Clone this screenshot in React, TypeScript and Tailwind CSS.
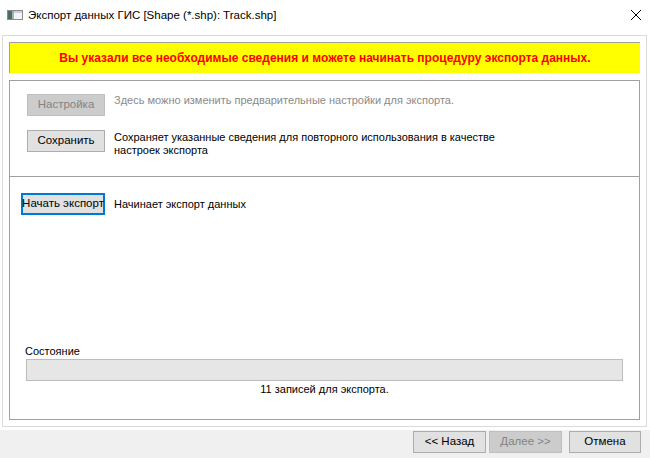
import React from 'react';

const font = { fontFamily: '"Liberation Sans", Arial, sans-serif' };

const WinButton: React.FC<{ label: string; disabled?: boolean; focused?: boolean; className?: string }> = ({ label, disabled, focused, className }) => {
    let look = 'bg-[#e1e1e1] border border-[#adadad] text-black';
    if (disabled) look = 'bg-[#cccccc] border border-[#bfbfbf] text-[#838383]';
    if (focused) look = 'bg-[#e1e1e1] border-2 border-[#0078d7] text-black';
    return (
        <div className={`flex items-center justify-center h-[22px] text-[11.5px] leading-none whitespace-nowrap ${look} ${className ?? ''}`}>
            {label}
        </div>
    );
};

const AppIcon = () => (
    <svg width="16" height="10" viewBox="0 0 16 10">
        <rect x="0.5" y="0.5" width="15" height="9" fill="#f4f4f4" stroke="#8a8a8a" />
        <rect x="1" y="1" width="4" height="8" fill="#4d6b6a" />
        <rect x="5" y="1" width="2" height="8" fill="#9fb3b0" />
        <rect x="7" y="1" width="8" height="2" fill="#c9d2d8" />
    </svg>
);

export default function App() {
    return (
        <div className="w-[650px] h-[458px] bg-[#f0f0f0] flex flex-col overflow-hidden" style={font}>
            <div className="bg-white h-[430px] flex flex-col">
                {/* title bar */}
                <div className="h-[35px] flex items-start pt-[9px] pl-[7px] pr-[9px]">
                    <div className="mt-[1px]"><AppIcon /></div>
                    <span className="ml-[5px] text-[11.5px] leading-[12px] text-black">Экспорт данных ГИС [Shape (*.shp): Track.shp]</span>
                    <div className="ml-auto mt-[1px]">
                        <svg width="10" height="10" viewBox="0 0 10 10">
                            <path d="M0 0 L10 10 M10 0 L0 10" stroke="#000" strokeWidth="1" />
                        </svg>
                    </div>
                </div>

                {/* frame */}
                <div className="ml-[2px] w-[645px] h-[392px] border border-[#dadada] p-[6px] flex flex-col">
                    <div className="h-[31px] bg-[#ffff00] border-t border-l border-[#a0a0a0] flex items-center justify-center">
                        <span className="text-[12px] font-bold text-[#ff0000]">Вы указали все необходимые сведения и можете начинать процедуру экспорта данных.</span>
                    </div>

                    <div className="mt-[7px] flex-1 border border-[#a0a0a0] flex flex-col text-[11px]">
                        <div className="h-[96px] border-b border-[#a0a0a0] pt-[13px]">
                            <div className="grid grid-cols-[95px_1fr] gap-x-[9px]">
                                <div className="flex justify-end"><WinButton label="Настройка" disabled className="w-[78px]" /></div>
                                <div className="text-[#8a8a8a] leading-[13px]">Здесь можно изменить предварительные настройки для экспорта.</div>
                            </div>
                            <div className="grid grid-cols-[95px_1fr] gap-x-[9px] mt-[14px]">
                                <div className="flex justify-end"><WinButton label="Сохранить" className="w-[78px]" /></div>
                                <div className="text-black leading-[13px] pt-[1px] w-[400px]">Сохраняет указанные сведения для повторного использования в качестве настроек экспорта</div>
                            </div>
                        </div>

                        <div className="flex-1 flex flex-col pt-[16px]">
                            <div className="grid grid-cols-[95px_1fr] gap-x-[9px]">
                                <div className="flex justify-end"><WinButton label="Начать экспорт" focused className="w-[84px] h-[21px]" /></div>
                                <div className="text-black leading-[13px] pt-[5px]">Начинает экспорт данных</div>
                            </div>

                            <div className="mt-auto px-[16px] pb-[23px]">
                                <div className="text-black leading-[13px] -ml-[1px]">Состояние</div>
                                <div className="mt-[1px] h-[22px] bg-[#e6e6e6] border border-[#bcbcbc]"></div>
                                <div className="mt-[2px] text-center text-black leading-[13px]">11 записей для экспорта.</div>
                            </div>
                        </div>
                    </div>
                </div>
            </div>

            {/* footer */}
            <div className="flex-1 flex justify-end items-start pt-[1px] pr-[9px]">
                <WinButton label="<< Назад" className="w-[73px]" />
                <WinButton label="Далее >>" disabled className="w-[73px] ml-[3px]" />
                <WinButton label="Отмена" className="w-[72px] ml-[7px]" />
            </div>
        </div>
    );
}
